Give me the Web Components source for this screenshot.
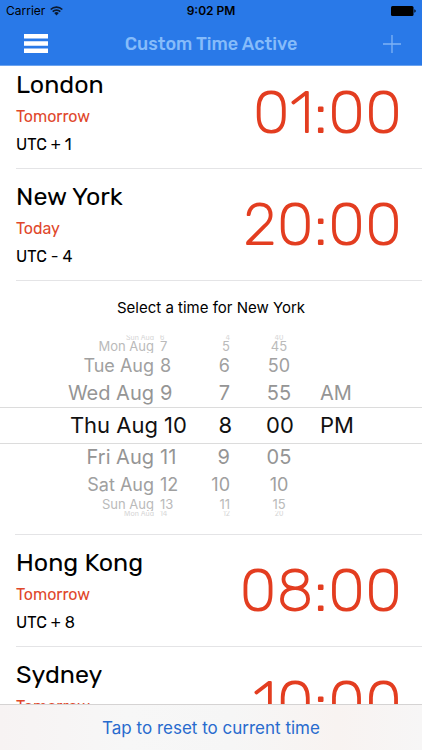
<!DOCTYPE html>
<html lang="en">
<head>
<meta charset="utf-8">
<meta name="viewport" content="width=device-width, initial-scale=1">
<title>World Clock</title>
<style>
  body { margin: 0; background: #fff; color: #000; font-family: Rubik, Roboto, "Liberation Sans", sans-serif; }
</style>
</head>
<body>
<clock-app></clock-app>

<template id="clock-app">
  <style>
    :host { display: flex; flex-direction: column; height: 100vh; overflow: hidden; }
    main { flex: 1; min-height: 0; overflow: hidden; }
    /* The list is scrolled slightly beneath the navigation bar. */
    .list { margin-top: -9px; }
  </style>
  <app-header>Custom Time Active</app-header>
  <main>
    <div class="list">
      <city-row time="01:00"><span slot="name">London</span><span slot="day">Tomorrow</span><span slot="zone">UTC + 1</span></city-row>
      <city-row time="20:00"><span slot="name">New York</span><span slot="day">Today</span><span slot="zone">UTC - 4</span></city-row>
      <time-picker>Select a time for New York</time-picker>
      <city-row time="08:00"><span slot="name">Hong Kong</span><span slot="day">Tomorrow</span><span slot="zone">UTC + 8</span></city-row>
      <city-row time="10:00"><span slot="name">Sydney</span><span slot="day">Tomorrow</span></city-row>
    </div>
  </main>
  <reset-bar>Tap to reset to current time</reset-bar>
</template>

<template id="app-header">
  <style>
    :host { display: block; position: relative; z-index: 1; background: #2979e8; border-bottom: 1px solid #6ba3ef; }
    .status { display: grid; grid-template-columns: 1fr auto 1fr; align-items: center; height: 22px; padding: 0 6px; font: 12px/22px Inter, sans-serif; }
    .carrier { display: flex; align-items: center; gap: 5px; }
    .clock { font-weight: 600; }
    .battery { justify-self: end; }
    svg { display: block; }
    nav { display: grid; grid-template-columns: 72px 1fr 72px; align-items: center; height: 43px; }
    button { display: grid; place-items: center; width: 72px; height: 43px; padding: 0; border: 0; background: none; color: #fff; }
    .add { width: 60px; justify-self: end; }
    h1 { margin: 0; text-align: center; font: 500 18px/24px Rubik, Roboto, sans-serif; color: #86bcfa; }
  </style>
  <div class="status">
    <span class="carrier">Carrier
      <svg width="13" height="10" viewBox="0 0 13 10" fill="none" stroke="#0b1a30" stroke-width="1.7"><path d="M.7 3.5a8.2 8.2 0 0 1 11.6 0M2.7 5.6a5.4 5.4 0 0 1 7.6 0"/><path d="M6.5 9.5 4.2 7.1a3.2 3.2 0 0 1 4.6 0z" fill="#0b1a30" stroke="none"/></svg>
    </span>
    <span class="clock">9:02 PM</span>
    <svg class="battery" width="25" height="10" viewBox="0 0 25 10"><rect width="22.5" height="10" rx="1.5"/><path d="M23.4 3.2q1.3.5 1.3 1.8t-1.3 1.8z"/></svg>
  </div>
  <nav>
    <button aria-label="Menu"><svg width="24" height="19" viewBox="0 0 24 19" fill="#fff"><path d="M0 0h24v4.4H0zM0 7.3h24v4.4H0zM0 14.6h24V19H0z"/></svg></button>
    <h1><slot></slot></h1>
    <button class="add" aria-label="Add city"><svg width="18" height="18" viewBox="0 0 18 18" stroke="#7fb3f5" stroke-width="1.3"><path d="M9 0v18M0 9h18"/></svg></button>
  </nav>
</template>

<template id="city-row">
  <style>
    :host { display: flex; justify-content: space-between; align-items: center; box-sizing: border-box; height: 112px; margin-left: 16px; padding-right: 20px; border-bottom: 1px solid #e4e4e6; }
    .name { font-size: 25px; line-height: 32px; margin-bottom: 4px; }
    .day, .zone { font-size: 16px; line-height: 24px; }
    .zone { margin-top: 4px; min-height: 24px; }
    .day { color: #e0472b; }
    time { color: #e33d20; font-weight: 300; font-size: 60px; line-height: 72px; }
  </style>
  <div>
    <div class="name"><slot name="name"></slot></div>
    <div class="day"><slot name="day"></slot></div>
    <div class="zone"><slot name="zone"></slot></div>
  </div>
  <time></time>
</template>

<template id="time-picker">
  <style>
    :host { display: block; padding-bottom: 18px; }
    :host { border-bottom: 1px solid transparent; border-image: linear-gradient(90deg, transparent 16px, #e4e4e6 16px) 1; }
    p { margin: 0; text-align: center; font: 15px/54px Inter, sans-serif; }
  </style>
  <p><slot></slot></p>
  <wheel-row depth="4" values="Sun Aug|6|4|40|"></wheel-row>
  <wheel-row depth="3" values="Mon Aug|7|5|45|"></wheel-row>
  <wheel-row depth="2" values="Tue Aug|8|6|50|"></wheel-row>
  <wheel-row depth="1" values="Wed Aug|9|7|55|AM"></wheel-row>
  <wheel-row depth="0" values="Thu Aug|10|8|00|PM"></wheel-row>
  <wheel-row depth="1" values="Fri Aug|11|9|05|"></wheel-row>
  <wheel-row depth="2" values="Sat Aug|12|10|10|"></wheel-row>
  <wheel-row depth="3" values="Sun Aug|13|11|15|"></wheel-row>
  <wheel-row depth="4" values="Mon Aug|14|12|20|"></wheel-row>
</template>

<template id="wheel-row">
  <style>
    :host { display: grid; grid-template-columns: 94px 30px 40px 90px 36px; justify-content: center; align-items: center; box-sizing: border-box; overflow: hidden; white-space: nowrap; font-family: Inter, sans-serif; }
    :host([depth="0"]) { grid-template-columns: 98px 26px 42px 88px 36px; height: 37px; margin: -1px 0; border: solid #dcdcdc; border-width: 1px 0; font-size: 22px; line-height: 35px; color: #111; }
    :host([depth="1"]) { height: 29px; font-size: 20px; line-height: 29px; color: #959595; }
    :host([depth="2"]) { height: 26px; font-size: 18px; line-height: 26px; color: #a0a0a0; }
    :host([depth="3"]) { height: 13px; font-size: 13px; line-height: 13px; color: #bababa; }
    :host([depth="4"]) { height: 5px; font-size: 7px; line-height: 5px; color: #d4d4d4; }
    .date { text-align: right; padding-right: 6px; }
    .hour { text-align: right; }
    .minute { text-align: center; padding-left: 8px; }
  </style>
  <span class="date"></span><span class="number"></span><span class="hour"></span><span class="minute"></span><span class="period"></span>
</template>

<template id="reset-bar">
  <style>
    :host { display: block; border-top: 1px solid #d5d3d3; background: linear-gradient(90deg, #f7f3f3, #f7f7f7 30%, #f6f6f6 55%, #f8f3f1 80%, #f7f6f6); }
    button { display: block; width: 100%; height: 45px; padding: 0; border: 0; background: none; color: #286bce; font: 17px/24px Inter, sans-serif; }
  </style>
  <button><slot></slot></button>
</template>

<script>
  class TemplateElement extends HTMLElement {
    constructor() {
      super();
      const template = document.getElementById(this.localName);
      this.attachShadow({ mode: "open" }).append(template.content.cloneNode(true));
    }
  }
  class CityRow extends TemplateElement {
    connectedCallback() {
      this.shadowRoot.querySelector("time").textContent = this.getAttribute("time");
    }
  }
  class WheelRow extends TemplateElement {
    connectedCallback() {
      const values = this.getAttribute("values").split("|");
      this.shadowRoot.querySelectorAll("span").forEach((cell, i) => { cell.textContent = values[i]; });
    }
  }
  customElements.define("wheel-row", WheelRow);
  customElements.define("city-row", CityRow);
  customElements.define("app-header", class extends TemplateElement {});
  customElements.define("time-picker", class extends TemplateElement {});
  customElements.define("reset-bar", class extends TemplateElement {});
  customElements.define("clock-app", class extends TemplateElement {});
</script>
</body>
</html>
